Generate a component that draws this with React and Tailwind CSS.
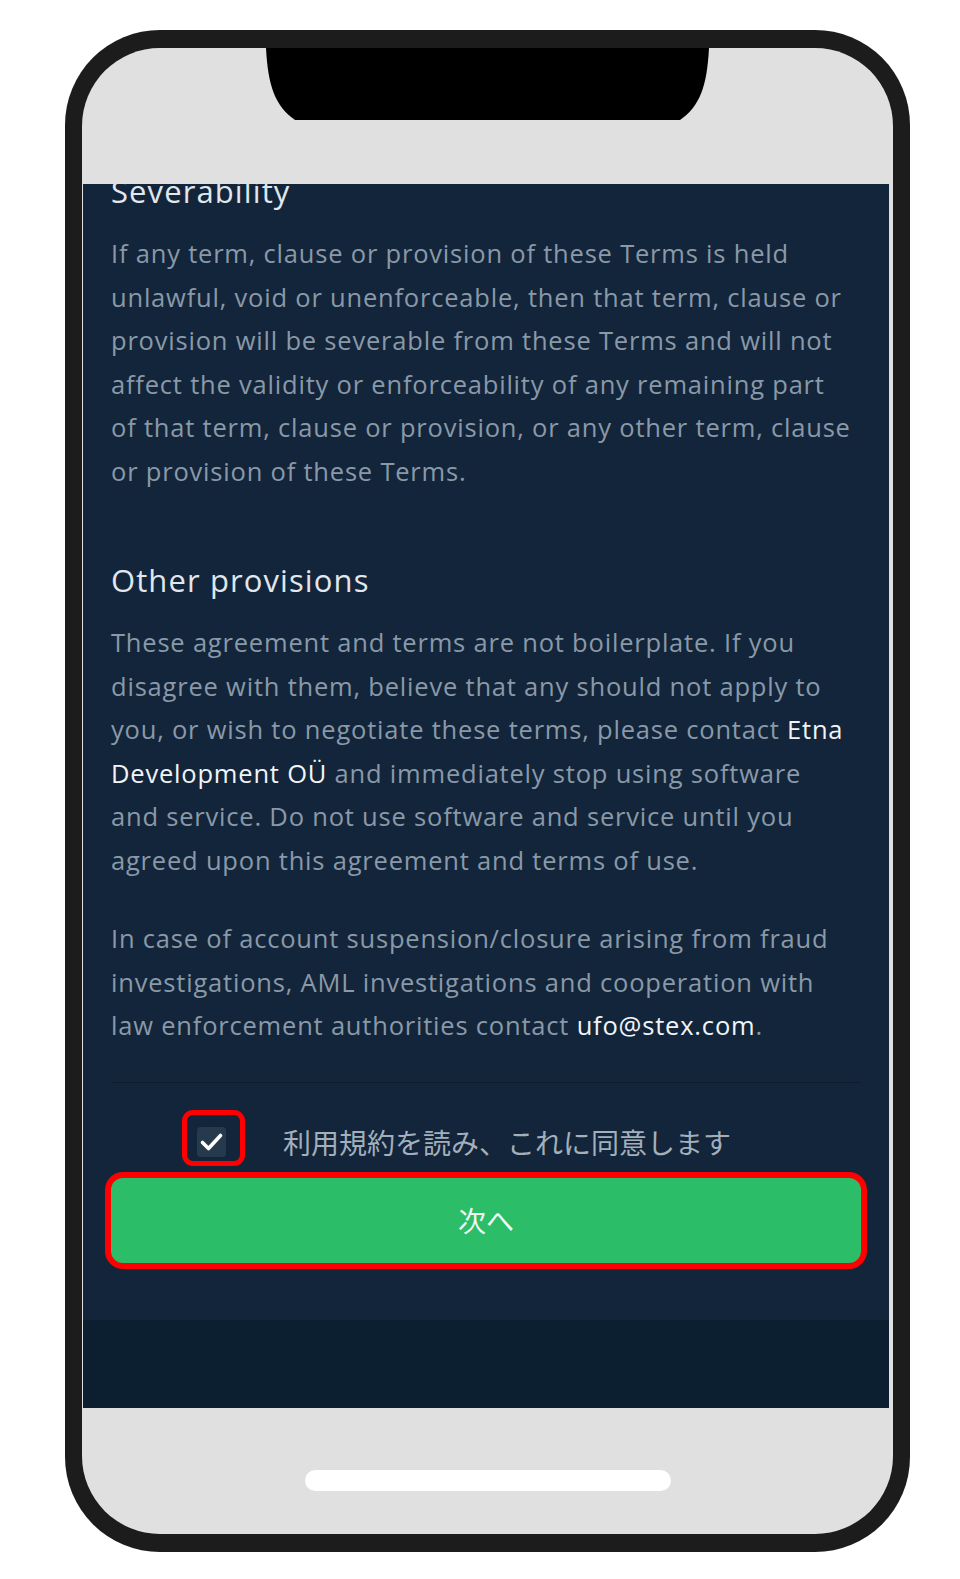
import React from "react";

const body = "text-[#8a99a8]";
const hi = "text-[#f1f4f7]";

const Lines = ({ lines, className = "" }) => (
  <p className={`text-[25.5px] leading-[43.5px] tracking-[0.8px] ${body} ${className}`}>
    {lines.map((l, i) => (
      <span key={i} className="block whitespace-nowrap">
        {l}
      </span>
    ))}
  </p>
);

const Notch = () => (
  <svg width="443" height="72" viewBox="0 0 443 72" className="block">
    <path d="M0 0 H443 C441 38 434 58 414 72 H29 C9 58 2 38 0 0 Z" fill="#000" />
  </svg>
);

const App = () => {
  return (
    <div className="w-[960px] h-[1579px] bg-white pt-[30px] pl-[65px]" style={{ fontFamily: "'Open Sans', 'Noto Sans CJK JP', sans-serif" }}>
      {/* phone body */}
      <div className="w-[845px] h-[1522px] rounded-[95px] bg-[#1c1c1c] px-[17px] pt-[18px] pb-[18px]">
        <div className="h-full rounded-[78px] bg-[#e0e0e0] overflow-hidden flex flex-col">
          {/* status area with notch */}
          <div className="h-[136px] shrink-0 flex justify-center">
            <Notch />
          </div>

          {/* app screen */}
          <div className="ml-px mr-[4px] flex flex-col">
            <div className="h-[1136px] bg-[#13253a] px-[28px] overflow-hidden">
              <div className="-mt-[15px]">
                <h2 className="text-[31px] leading-[44px] tracking-[1.1px] font-medium text-[#e1e7ec]">Severability</h2>
                <Lines
                  className="mt-[19px]"
                  lines={[
                    "If any term, clause or provision of these Terms is held",
                    "unlawful, void or unenforceable, then that term, clause or",
                    "provision will be severable from these Terms and will not",
                    "affect the validity or enforceability of any remaining part",
                    "of that term, clause or provision, or any other term, clause",
                    "or provision of these Terms.",
                  ]}
                />

                <h2 className="mt-[65px] text-[31px] leading-[44px] tracking-[1.1px] font-medium text-[#e1e7ec]">Other provisions</h2>
                <Lines
                  className="mt-[19px]"
                  lines={[
                    "These agreement and terms are not boilerplate. If you",
                    "disagree with them, believe that any should not apply to",
                    <>
                      you, or wish to negotiate these terms, please contact <span className={hi}>Etna</span>
                    </>,
                    <>
                      <span className={hi}>Development OÜ</span> and immediately stop using software
                    </>,
                    "and service. Do not use software and service until you",
                    "agreed upon this agreement and terms of use.",
                  ]}
                />
                <Lines
                  className="mt-[35px]"
                  lines={[
                    "In case of account suspension/closure arising from fraud",
                    "investigations, AML investigations and cooperation with",
                    <>
                      law enforcement authorities contact <span className={hi}>ufo@stex.com</span>.
                    </>,
                  ]}
                />

                <div className="mt-[34px] h-px bg-[#0d1b2a]" />

                {/* agree checkbox */}
                <div className="mt-[37px] h-[44px] flex items-center pl-[86px] gap-[57px]">
                  <div className="relative">
                    <div className="w-[29px] h-[30px] rounded-[4px] bg-[#263a4d]">
                      <svg width="29" height="30" viewBox="0 0 29 30" className="block">
                        <polyline
                          points="5.5,15.5 11.5,21.5 23.5,8.5"
                          fill="none"
                          stroke="#fff"
                          strokeWidth="3.6"
                          strokeLinecap="round"
                          strokeLinejoin="round"
                        />
                      </svg>
                    </div>
                    <div className="absolute -left-[15px] -top-[17px] w-[63px] h-[56px] rounded-[11px] border-[5px] border-[#ff0000]" />
                  </div>
                  <span
                    className="text-[28px] leading-[44px] text-[#a3afba]"
                    style={{ fontFamily: "'Noto Sans CJK JP', sans-serif" }}
                  >
                    利用規約を読み、これに同意します
                  </span>
                </div>

                <button
                  className="mt-[14px] w-full h-[85px] rounded-[12px] bg-[#2bbd68] ring-[6px] ring-[#ff0000] text-[28px] text-[#eef8f1] flex items-center justify-center"
                  style={{ fontFamily: "'Noto Sans CJK JP', sans-serif" }}
                >
                  次へ
                </button>
              </div>
            </div>
            <div className="h-[88px] bg-[#0c1f30]" />
          </div>

          {/* home indicator */}
          <div className="flex-1 flex justify-center pt-[62px]">
            <div className="w-[366px] h-[21px] rounded-full bg-white" />
          </div>
        </div>
      </div>
    </div>
  );
};

export default App;
